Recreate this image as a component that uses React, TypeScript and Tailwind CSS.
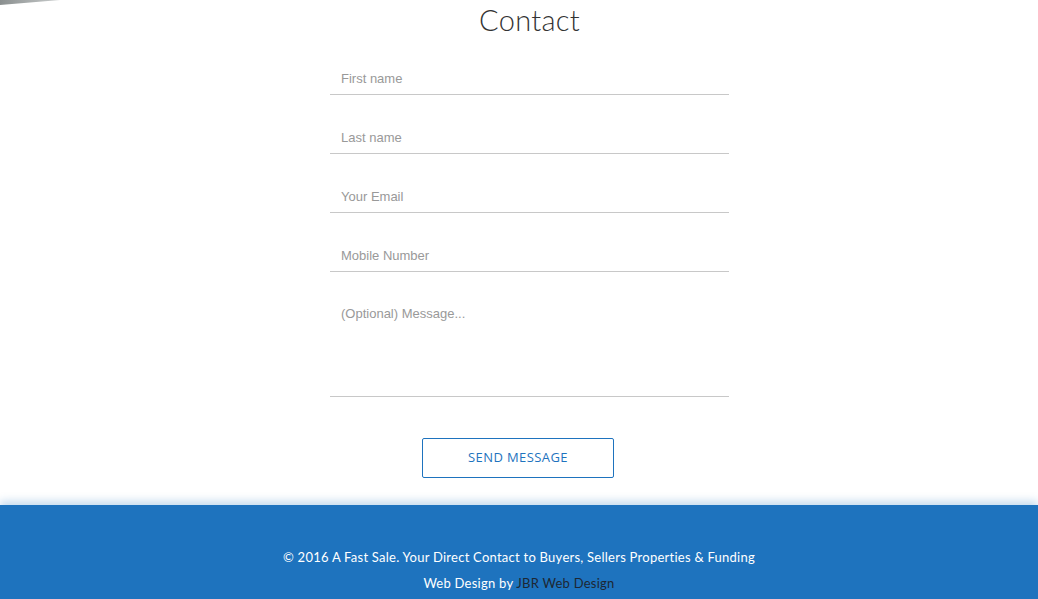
import { useState } from 'react';

const fields = ['First name', 'Last name', 'Your Email', 'Mobile Number'];

export default function App() {
  const [values, setValues] = useState<Record<string, string>>({});

  return (
    <div className="relative min-h-[599px] bg-white flex flex-col" style={{ fontFamily: '"Liberation Sans", Arial, sans-serif' }}>
      {/* slanted strip left over from the section above */}
      <svg className="absolute left-0 top-0" width="70" height="6" viewBox="0 0 70 6">
        <defs>
          <linearGradient id="strip" x1="0" x2="1" y1="0" y2="0">
            <stop offset="0" stopColor="#8a8f8f" />
            <stop offset="1" stopColor="#c9cccc" />
          </linearGradient>
        </defs>
        <polygon points="0,0 60,0 0,5" fill="url(#strip)" />
      </svg>

      <section className="flex-1 flex flex-col items-center pl-[21px]">
        <h2 className="mt-[3px] text-[29px] leading-[34px] font-light text-[#333] tracking-[0.3px]" style={{ fontFamily: 'Lato, sans-serif' }}>
          Contact
        </h2>

        <form className="w-[399px] mt-[25px] flex flex-col gap-[26px]" onSubmit={(e) => e.preventDefault()}>
          {fields.map((f) => (
            <input
              key={f}
              placeholder={f}
              value={values[f] ?? ''}
              onChange={(e) => setValues({ ...values, [f]: e.target.value })}
              className="h-[33px] px-[11px] border-b border-[#c8c8c8] text-[13px] text-[#555] placeholder:text-[#999] outline-none bg-transparent"
            />
          ))}
          <textarea
            placeholder="(Optional) Message..."
            className="h-[99px] px-[11px] pt-[8px] border-b border-[#c8c8c8] text-[13px] leading-[15px] text-[#555] placeholder:text-[#999] outline-none resize-none bg-transparent"
          />
        </form>
      </section>

      <div className="flex justify-center mt-[41px] mb-[27px] pr-[2px]">
        <button
          type="button"
          className="w-[192px] h-[40px] border border-[#1e73be] rounded-[2px] text-[#1e73be] text-[13px] tracking-[0.4px] uppercase"
          style={{ fontFamily: '"Open Sans", sans-serif' }}
        >
          Send Message
        </button>
      </div>

      <footer
        className="bg-[#1e73be] h-[94px] pt-[42px] flex flex-col items-center gap-[6px] text-white text-[13px] leading-[20px] tracking-[0.25px] shadow-[0_-4px_8px_rgba(30,115,190,0.25)]"
        style={{ fontFamily: 'Lato, sans-serif' }}
      >
        <p>© 2016 A Fast Sale. Your Direct Contact to Buyers, Sellers Properties &amp; Funding</p>
        <p>
          Web Design by <a href="#" className="text-[#1d2733]">JBR Web Design</a>
        </p>
      </footer>
    </div>
  );
}
